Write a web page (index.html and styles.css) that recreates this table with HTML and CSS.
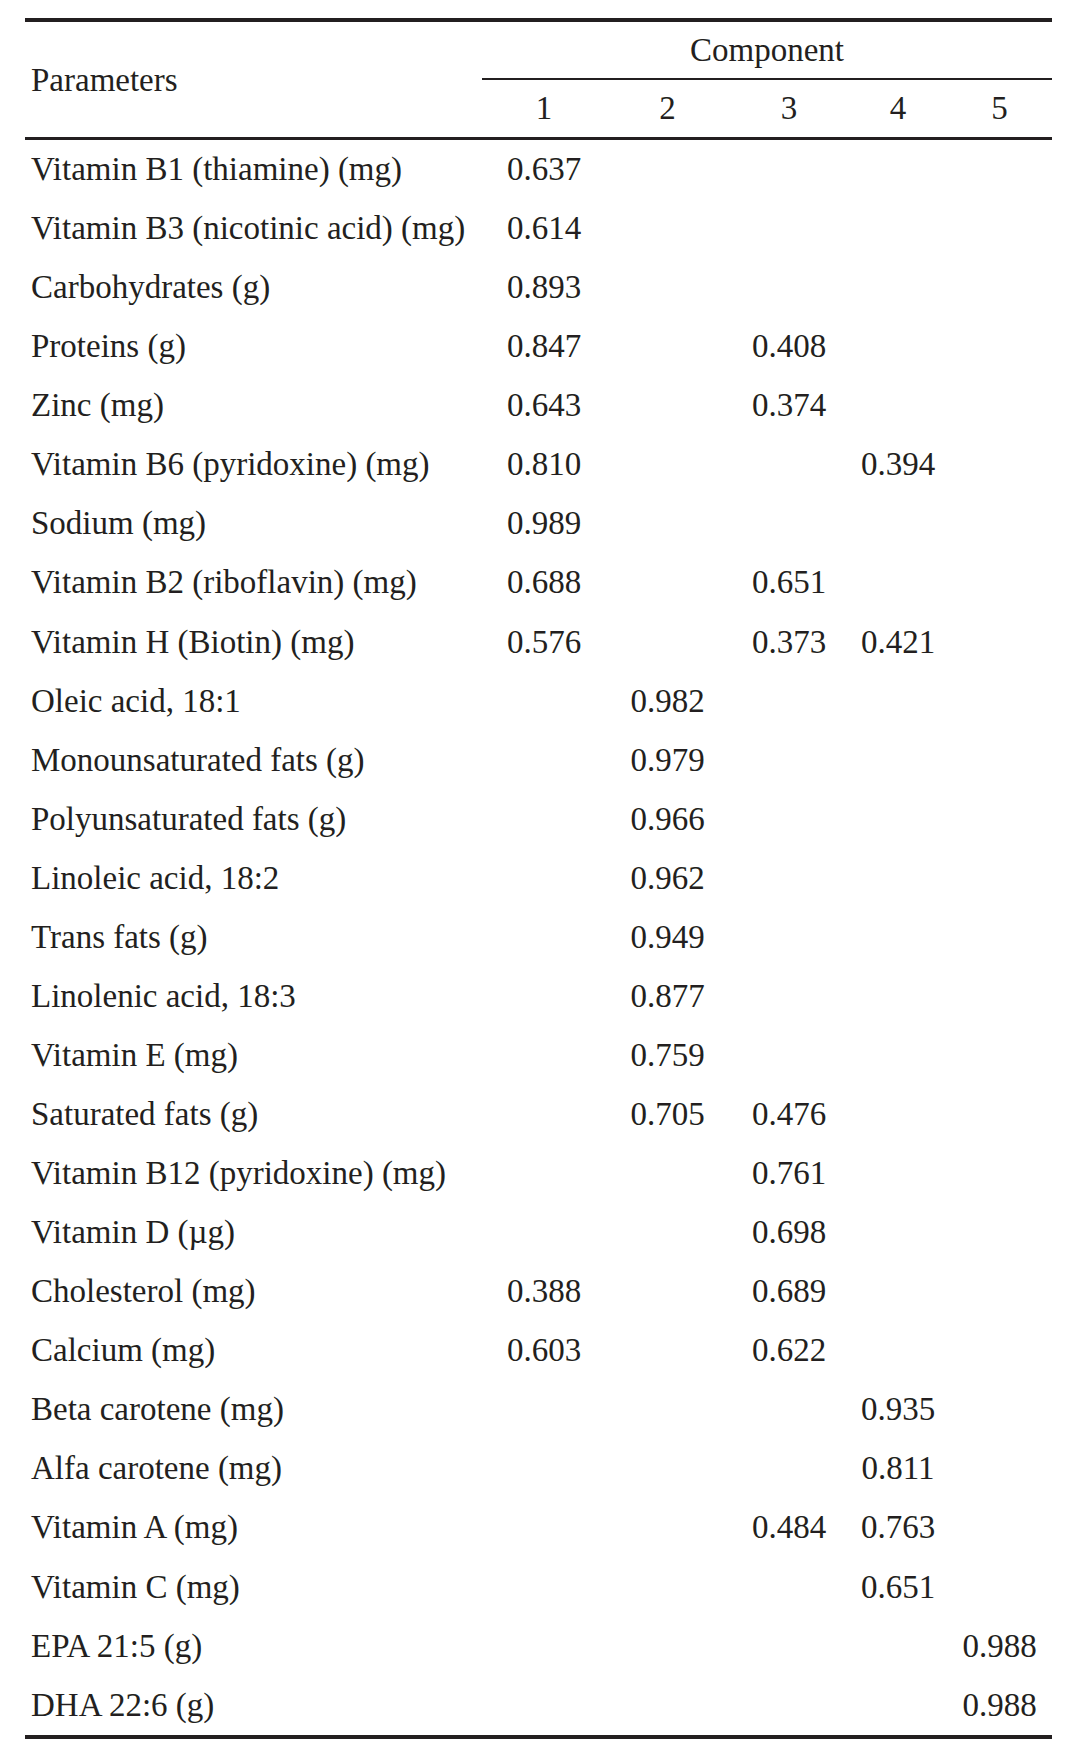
FILE: index.html
```html
<!DOCTYPE html>
<html lang="en">
<head>
<meta charset="utf-8">
<title>Component loadings</title>
<link rel="stylesheet" href="styles.css">
</head>
<body>
<table class="loadings">
  <colgroup>
    <col class="c-label">
    <col class="c1"><col class="c2"><col class="c3"><col class="c4"><col class="c5">
  </colgroup>
  <thead>
    <tr class="h1">
      <th class="param" rowspan="2">Parameters</th>
      <th class="comp" colspan="5">Component</th>
    </tr>
    <tr class="h2">
      <th>1</th><th>2</th><th>3</th><th>4</th><th>5</th>
    </tr>
  </thead>
  <tbody>
    <tr><td>Vitamin B1 (thiamine) (mg)</td><td>0.637</td><td></td><td></td><td></td><td></td></tr>
    <tr><td>Vitamin B3 (nicotinic acid) (mg)</td><td>0.614</td><td></td><td></td><td></td><td></td></tr>
    <tr><td>Carbohydrates (g)</td><td>0.893</td><td></td><td></td><td></td><td></td></tr>
    <tr><td>Proteins (g)</td><td>0.847</td><td></td><td>0.408</td><td></td><td></td></tr>
    <tr><td>Zinc (mg)</td><td>0.643</td><td></td><td>0.374</td><td></td><td></td></tr>
    <tr><td>Vitamin B6 (pyridoxine) (mg)</td><td>0.810</td><td></td><td></td><td>0.394</td><td></td></tr>
    <tr><td>Sodium (mg)</td><td>0.989</td><td></td><td></td><td></td><td></td></tr>
    <tr><td>Vitamin B2 (riboflavin) (mg)</td><td>0.688</td><td></td><td>0.651</td><td></td><td></td></tr>
    <tr><td>Vitamin H (Biotin) (mg)</td><td>0.576</td><td></td><td>0.373</td><td>0.421</td><td></td></tr>
    <tr><td>Oleic acid, 18:1</td><td></td><td>0.982</td><td></td><td></td><td></td></tr>
    <tr><td>Monounsaturated fats (g)</td><td></td><td>0.979</td><td></td><td></td><td></td></tr>
    <tr><td>Polyunsaturated fats (g)</td><td></td><td>0.966</td><td></td><td></td><td></td></tr>
    <tr><td>Linoleic acid, 18:2</td><td></td><td>0.962</td><td></td><td></td><td></td></tr>
    <tr><td>Trans fats (g)</td><td></td><td>0.949</td><td></td><td></td><td></td></tr>
    <tr><td>Linolenic acid, 18:3</td><td></td><td>0.877</td><td></td><td></td><td></td></tr>
    <tr><td>Vitamin E (mg)</td><td></td><td>0.759</td><td></td><td></td><td></td></tr>
    <tr><td>Saturated fats (g)</td><td></td><td>0.705</td><td>0.476</td><td></td><td></td></tr>
    <tr><td>Vitamin B12 (pyridoxine) (mg)</td><td></td><td></td><td>0.761</td><td></td><td></td></tr>
    <tr><td>Vitamin D (µg)</td><td></td><td></td><td>0.698</td><td></td><td></td></tr>
    <tr><td>Cholesterol (mg)</td><td>0.388</td><td></td><td>0.689</td><td></td><td></td></tr>
    <tr><td>Calcium (mg)</td><td>0.603</td><td></td><td>0.622</td><td></td><td></td></tr>
    <tr><td>Beta carotene (mg)</td><td></td><td></td><td></td><td>0.935</td><td></td></tr>
    <tr><td>Alfa carotene (mg)</td><td></td><td></td><td></td><td>0.811</td><td></td></tr>
    <tr><td>Vitamin A (mg)</td><td></td><td></td><td>0.484</td><td>0.763</td><td></td></tr>
    <tr><td>Vitamin C (mg)</td><td></td><td></td><td></td><td>0.651</td><td></td></tr>
    <tr><td>EPA 21:5 (g)</td><td></td><td></td><td></td><td></td><td>0.988</td></tr>
    <tr class="last"><td>DHA 22:6 (g)</td><td></td><td></td><td></td><td></td><td>0.988</td></tr>
  </tbody>
</table>
</body>
</html>
```

FILE: styles.css
```css
html, body {
  margin: 0;
  padding: 0;
  background: #ffffff;
}

body {
  padding: 18px 0 0 25px;
  color: #231f20;
  font-family: "Liberation Serif", "Times New Roman", serif;
  font-size: 33px;
}

.loadings {
  width: 1027px;
  border-collapse: separate;
  border-spacing: 0;
  table-layout: fixed;
}

.c-label { width: 457px; }
.c1 { width: 124px; }
.c2 { width: 123px; }
.c3 { width: 120px; }
.c4 { width: 98px; }
.c5 { width: 105px; }

.loadings th,
.loadings td {
  padding: 0;
  font-weight: normal;
  text-align: center;
  vertical-align: middle;
  white-space: nowrap;
}

.loadings th.param {
  text-align: left;
  padding-left: 6px;
  border-top: 4px solid #231f20;
  border-bottom: 3px solid #231f20;
  line-height: 36px;
}

.loadings th.comp {
  border-top: 4px solid #231f20;
  border-bottom: 2px solid #231f20;
  height: 56px;
  line-height: 56px;
}

.h2 th {
  height: 57px;
  line-height: 57px;
  border-bottom: 3px solid #231f20;
}

.loadings tbody td {
  height: 59.06px;
  line-height: 59.06px;
}

.loadings tbody td:first-child {
  text-align: left;
  padding-left: 6px;
}

.loadings tbody tr.last td {
  border-bottom: 4px solid #231f20;
}
```
